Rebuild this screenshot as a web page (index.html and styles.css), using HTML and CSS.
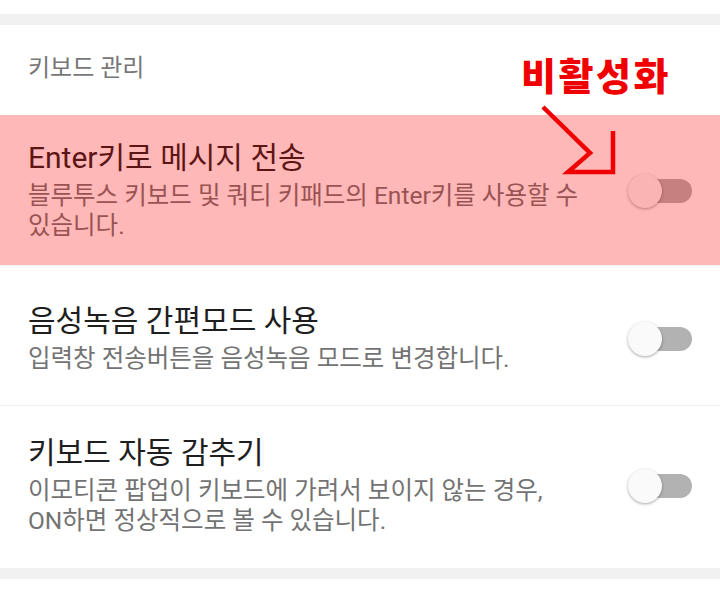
FILE: index.html
```html
<!DOCTYPE html>
<html lang="ko">
<head>
    <meta charset="UTF-8">
    <meta name="viewport" content="width=device-width, initial-scale=1.0">
    <title>키보드 관리</title>
    <link rel="stylesheet" href="styles.css">
</head>
<body>
    <div class="top-space"></div>
    <div class="band"></div>

    <div class="section-title">키보드 관리</div>

    <!-- settings list -->
    <div class="list">
        <div class="row row-first">
            <div class="row-text">
                <div class="row-title">Enter키로 메시지 전송</div>
                <div class="row-desc">블루투스 키보드 및 쿼티 키패드의 Enter키를 사용할 수<br>있습니다.</div>
            </div>
            <div class="switch"><span class="track"></span><span class="thumb"></span></div>
        </div>
        <div class="row row-single">
            <div class="row-text">
                <div class="row-title">음성녹음 간편모드 사용</div>
                <div class="row-desc">입력창 전송버튼을 음성녹음 모드로 변경합니다.</div>
            </div>
            <div class="switch"><span class="track"></span><span class="thumb"></span></div>
        </div>
        <div class="row row-last">
            <div class="row-text">
                <div class="row-title">키보드 자동 감추기</div>
                <div class="row-desc">이모티콘 팝업이 키보드에 가려서 보이지 않는 경우,<br>ON하면 정상적으로 볼 수 있습니다.</div>
            </div>
            <div class="switch"><span class="track"></span><span class="thumb"></span></div>
        </div>
    </div>

    <div class="band bottom-band"></div>

    <!-- annotation on top of the screenshot -->
    <div class="highlight"></div>
    <div class="note">비활성화</div>
    <svg class="arrow" width="720" height="610" viewBox="0 0 720 610">
        <polyline points="543,107 590,153 568,172 613,172 613,131" fill="none" stroke="#f00000" stroke-width="4.5" stroke-linejoin="miter"/>
    </svg>
</body>
</html>
```

FILE: styles.css
```css
body {
    margin: 0;
    width: 720px;
    height: 610px;
    overflow: hidden;
    background-color: #fff;
    font-family: Roboto, "Noto Sans CJK KR", sans-serif;
    position: relative;
}
.top-space {
    height: 14px;
}
.band {
    height: 11px;
    background-color: #f1f1f1;
}
.section-title {
    padding: 28px 28px 32px;
    font-size: 24px;
    line-height: 30px;
    color: #777;
}
.row {
    display: flex;
    align-items: center;
    padding: 25px 28px 24px;
    border-bottom: 1px solid #f2f2f2;
}
.row-single {
    padding-top: 37px;
    padding-bottom: 31px;
}
.row-last {
    padding-top: 29px;
    padding-bottom: 32px;
    border-bottom: none;
}
.row-text {
    flex: 1;
}
.row-title {
    font-size: 30px;
    line-height: 36px;
    color: #1e1e1e;
}
.row-desc {
    margin-top: 5px;
    font-size: 24.5px;
    line-height: 30px;
    color: #737373;
}
.switch {
    position: relative;
    width: 64px;
    height: 34px;
    flex-shrink: 0;
}
.track {
    position: absolute;
    right: 0;
    top: 5px;
    width: 52px;
    height: 24px;
    border-radius: 12px;
    background-color: #b2b2b2;
}
.thumb {
    position: absolute;
    left: 0;
    top: 0;
    width: 34px;
    height: 34px;
    border-radius: 50%;
    background-color: #fafafa;
    box-shadow: 0 1px 3px rgba(0, 0, 0, 0.35);
}
.highlight {
    position: absolute;
    left: 0;
    top: 115px;
    width: 720px;
    height: 150px;
    background-color: rgba(255, 0, 0, 0.28);
}
.note {
    position: absolute;
    left: 521px;
    top: 54px;
    font-size: 38px;
    line-height: 46px;
    font-weight: 900;
    color: #f00000;
    letter-spacing: 2.5px;
}
.arrow {
    position: absolute;
    left: 0;
    top: 0;
}
```
